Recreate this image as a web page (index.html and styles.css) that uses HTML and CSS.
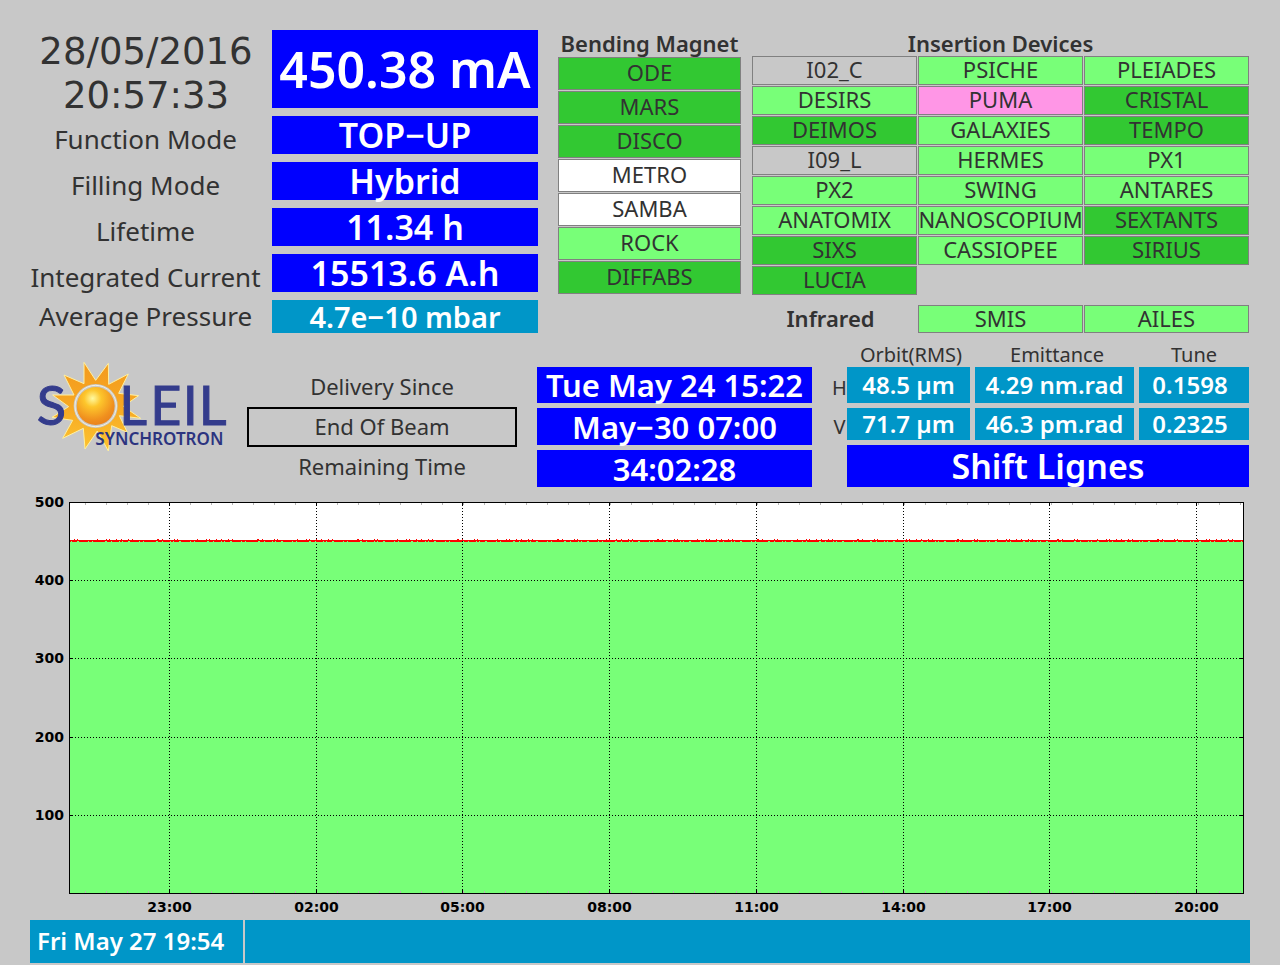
FILE: index.html
```html
<!DOCTYPE html>
<html lang="en">
<head>
<meta charset="utf-8">
<title>SOLEIL Machine Status</title>
<link rel="stylesheet" href="styles.css">
</head>
<body>
<main class="panel">
  <section class="top">
    <div class="machine">
      <div class="clock"><span>28/05/2016</span><span>20:57:33</span></div>
      <div class="value current">450.38 mA</div>
      <div class="label">Function Mode</div><div class="value">TOP−UP</div>
      <div class="label">Filling Mode</div><div class="value">Hybrid</div>
      <div class="label">Lifetime</div><div class="value">11.34 h</div>
      <div class="label">Integrated Current</div><div class="value">15513.6 A.h</div>
      <div class="label pressure">Average Pressure</div><div class="value teal pressure-value">4.7e−10 mbar</div>
    </div>
    <div class="bending">
      <h2>Bending Magnet</h2>
      <div class="magnets">
        <div class="line open">ODE</div>
        <div class="line open">MARS</div>
        <div class="line open">DISCO</div>
        <div class="line idle">METRO</div>
        <div class="line idle">SAMBA</div>
        <div class="line ready">ROCK</div>
        <div class="line open">DIFFABS</div>
      </div>
    </div>
    <div class="insertion">
      <h2>Insertion Devices</h2>
      <div class="devices">
        <div class="line">I02_C</div><div class="line ready">PSICHE</div><div class="line ready">PLEIADES</div>
        <div class="line ready">DESIRS</div><div class="line alert">PUMA</div><div class="line open">CRISTAL</div>
        <div class="line open">DEIMOS</div><div class="line ready">GALAXIES</div><div class="line open">TEMPO</div>
        <div class="line">I09_L</div><div class="line ready">HERMES</div><div class="line ready">PX1</div>
        <div class="line ready">PX2</div><div class="line ready">SWING</div><div class="line ready">ANTARES</div>
        <div class="line ready">ANATOMIX</div><div class="line ready">NANOSCOPIUM</div><div class="line open">SEXTANTS</div>
        <div class="line open">SIXS</div><div class="line ready">CASSIOPEE</div><div class="line open">SIRIUS</div>
        <div class="line open">LUCIA</div>
      </div>
      <div class="infrared">
        <h2>Infrared</h2><div class="line ready">SMIS</div><div class="line ready">AILES</div>
      </div>
    </div>
  </section>

  <section class="middle">
    <svg class="logo" viewBox="0 0 630 300" role="img" aria-label="SOLEIL Synchrotron">
      <defs>
        <radialGradient id="ball" cx="0.42" cy="0.3" r="0.75">
          <stop offset="0" stop-color="#fff9a0"/><stop offset="0.3" stop-color="#fdc62c"/>
          <stop offset="0.75" stop-color="#f0901e"/><stop offset="1" stop-color="#e87f1c"/>
        </radialGradient>
        <linearGradient id="rays" x1="0" y1="0" x2="0" y2="1">
          <stop offset="0" stop-color="#f39a1c"/><stop offset="0.5" stop-color="#f7a823"/><stop offset="1" stop-color="#fcc430"/>
        </linearGradient>
      </defs>
      <polygon class="rays" points="162,22 197,76 235,25 236,88 295,57 266,115 326,122 280,154 332,190 268,182 292,232 245,212 235,288 202,228 165,282 160,220 98,250 128,196 66,187 116,155 68,120 132,120 102,60 162,86"/>
      <circle cx="197" cy="153" r="66" fill="#c8c8c8"/>
      <circle cx="197" cy="153" r="62" fill="none" stroke="#f4f0dc" stroke-width="3"/>
      <circle cx="197" cy="153" r="57" fill="url(#ball)"/>
      <text class="brand" x="20 268 361 458 506" y="211">SLEIL</text>
      <text class="subbrand" x="196" y="269">SYNCHROTRON</text>
    </svg>
    <div class="schedule">
      <span>Delivery Since</span>
      <span class="boxed">End Of Beam</span>
      <span>Remaining Time</span>
    </div>
    <div class="times">
      <div class="value">Tue May 24 15:22</div>
      <div class="value">May−30 07:00</div>
      <div class="value">34:02:28</div>
    </div>
    <div class="beam">
      <table>
        <colgroup><col class="c-axis"><col class="c-orbit"><col class="c-emit"><col class="c-tune"></colgroup>
        <thead><tr><td></td><th scope="col">Orbit(RMS)</th><th scope="col">Emittance</th><th scope="col">Tune</th></tr></thead>
        <tbody>
          <tr class="h"><th scope="row">H</th><td>48.5 µm</td><td>4.29 nm.rad</td><td class="tune">0.1598</td></tr>
          <tr class="v"><th scope="row">V</th><td>71.7 µm</td><td>46.3 pm.rad</td><td class="tune">0.2325</td></tr>
        </tbody>
      </table>
      <div class="value shift">Shift Lignes</div>
    </div>
  </section>

  <section class="chart">
    <svg class="plot" role="img" aria-label="Beam current over the last 24 hours">
      <rect width="100%" height="392" fill="#fff"/>
      <rect y="39" width="100%" height="353" fill="#78ff78"/>
      <g class="minor"><line x1="16" x2="100%" y1="2" y2="2"/><line x1="16" x2="100%" y1="390" y2="390"/></g>
      <g class="grid">
        <line x1="0" x2="100%" y1="78.5" y2="78.5"/><line x1="0" x2="100%" y1="156.5" y2="156.5"/>
        <line x1="0" x2="100%" y1="235.5" y2="235.5"/><line x1="0" x2="100%" y1="313.5" y2="313.5"/>
        <line x1="8.55%" x2="8.55%" y1="0" y2="392"/><line x1="21.06%" x2="21.06%" y1="0" y2="392"/>
        <line x1="33.49%" x2="33.49%" y1="0" y2="392"/><line x1="46%" x2="46%" y1="0" y2="392"/>
        <line x1="58.51%" x2="58.51%" y1="0" y2="392"/><line x1="71.02%" x2="71.02%" y1="0" y2="392"/>
        <line x1="83.45%" x2="83.45%" y1="0" y2="392"/><line x1="95.96%" x2="95.96%" y1="0" y2="392"/>
      </g>
      <g class="ticks">
        <line x1="8.55%" x2="8.55%" y1="0" y2="392"/><line x1="21.06%" x2="21.06%" y1="0" y2="392"/>
        <line x1="33.49%" x2="33.49%" y1="0" y2="392"/><line x1="46%" x2="46%" y1="0" y2="392"/>
        <line x1="58.51%" x2="58.51%" y1="0" y2="392"/><line x1="71.02%" x2="71.02%" y1="0" y2="392"/>
        <line x1="83.45%" x2="83.45%" y1="0" y2="392"/><line x1="95.96%" x2="95.96%" y1="0" y2="392"/>
      </g>
      <g class="side">
        <line x1="0" x2="4" y1="78.5" y2="78.5"/><line x1="0" x2="4" y1="156.5" y2="156.5"/>
        <line x1="0" x2="4" y1="235.5" y2="235.5"/><line x1="0" x2="4" y1="313.5" y2="313.5"/>
        <line x1="99.66%" x2="100%" y1="78.5" y2="78.5"/><line x1="99.66%" x2="100%" y1="156.5" y2="156.5"/>
        <line x1="99.66%" x2="100%" y1="235.5" y2="235.5"/><line x1="99.66%" x2="100%" y1="313.5" y2="313.5"/>
      </g>
      <g class="trace">
        <line class="peaks" x1="5" x2="100%" y1="37.5" y2="37.5"/>
        <line x1="0" x2="100%" y1="38.5" y2="38.5"/>
        <line class="dips" x1="0" x2="100%" y1="39.5" y2="39.5"/>
      </g>
      <g class="frame"><line x1="0" x2="100%" y1="0.5" y2="0.5"/><line x1="0" x2="100%" y1="391.5" y2="391.5"/><line x1="0.5" x2="0.5" y1="0" y2="392"/><line x1="99.96%" x2="99.96%" y1="0" y2="392"/></g>
      <g class="yaxis">
        <text x="-5" y="5">500</text><text x="-5" y="83">400</text><text x="-5" y="161">300</text>
        <text x="-5" y="240">200</text><text x="-5" y="318">100</text>
      </g>
      <g class="xaxis">
        <text x="8.55%" y="410">23:00</text><text x="21.06%" y="410">02:00</text><text x="33.49%" y="410">05:00</text>
        <text x="46%" y="410">08:00</text><text x="58.51%" y="410">11:00</text><text x="71.02%" y="410">14:00</text>
        <text x="83.45%" y="410">17:00</text><text x="95.96%" y="410">20:00</text>
      </g>
    </svg>
  </section>

  <footer class="messages">
    <div>Fri May 27 19:54</div><div></div>
  </footer>
</main>
</body>
</html>
```
FILE: styles.css
```css
* { box-sizing: border-box; }
body {
  margin: 0;
  background: #c8c8c8;
  color: #323232;
  font-family: "DejaVu Sans", "Noto Sans", sans-serif;
}
.panel { padding: 30px 30px 2px; }
h2 {
  margin: 0;
  font: 600 22px/26px "Noto Sans", sans-serif;
  text-align: center;
  white-space: nowrap;
}
.top {
  display: grid;
  grid-template-columns: 508fr 203fr 509fr;
}
.machine {
  display: grid;
  grid-template-columns: 242fr 266fr;
  grid-template-rows: 78px repeat(4, 38px) 33px;
  row-gap: 8px;
}
.clock {
  display: flex;
  flex-direction: column;
  padding-right: 10px;
  text-align: center;
  font-size: 37px;
  line-height: 44px;
}
.label {
  padding: 4px 11px 0 0;
  text-align: center;
  font: 26px/38px "Noto Sans", sans-serif;
  white-space: nowrap;
}
.pressure { padding-top: 0; line-height: 33px; }
.value {
  display: flex;
  align-items: center;
  justify-content: center;
  background: #0000ff;
  color: #fff;
  font: 600 34px/38px "Noto Sans", sans-serif;
  white-space: nowrap;
}
.value.current { font-size: 50px; }
.value.teal { background: #0096c8; }
.value.pressure-value { font-size: 29px; line-height: 33px; }

.bending { padding-left: 20px; }
.magnets { display: grid; gap: 1px; margin-top: 1px; grid-auto-rows: 33px; }
.insertion { padding: 0 1px 0 11px; }
.devices {
  display: grid;
  grid-template-columns: repeat(3, minmax(0, 1fr));
  grid-auto-rows: 29px;
  gap: 1px;
}
.infrared {
  display: grid;
  grid-template-columns: repeat(3, minmax(0, 1fr));
  grid-auto-rows: 28px;
  gap: 1px;
  margin-top: 10px;
}
.infrared h2 { padding-right: 8px; }
.line {
  display: flex;
  align-items: center;
  justify-content: center;
  padding-bottom: 3px;
  border: 1px solid #808080;
  font: 22px/24px "Noto Sans", sans-serif;
}
.ready { background: #78ff78; }
.open { background: #32c832; }
.idle { background: #fff; }
.alert { background: #ff96e6; }

.middle {
  display: grid;
  grid-template-columns: 217fr 290fr 275fr 438fr;
  margin-top: 9px;
  height: 145px;
}
.logo { width: 210px; height: 100px; margin-top: 13px; }
.rays { fill: url(#rays); stroke: #fff0a0; stroke-width: 3; }
.brand { font: 162px "Lato", sans-serif; fill: #343c8c; stroke: #343c8c; stroke-width: 3; }
.subbrand { font: 600 51px "Noto Sans", sans-serif; fill: #2c3480; }
.schedule {
  display: grid;
  grid-template-rows: 40px 40px 40px;
  align-content: end;
  margin-right: 20px;
  text-align: center;
  font: 22px/38px "Noto Sans", sans-serif;
}
.boxed { border: 2px solid #000; line-height: 34px; }
.times {
  display: grid;
  grid-template-rows: 36px 37px 37px;
  align-content: end;
  gap: 5px;
}
.times .value { font-size: 31px; line-height: 36px; }
.beam { display: flex; flex-direction: column; padding: 0 1px 0 20px; }
table {
  width: 100%;
  table-layout: fixed;
  border-collapse: separate;
  border-spacing: 0;
}
.c-axis { width: 15px; }
.c-orbit { width: 128px; }
.c-emit { width: 164px; }
th { font: 20px/25px "Noto Sans", sans-serif; padding: 0; text-align: center; }
td { padding: 0; }
tbody td {
  background: #0096c8;
  background-clip: padding-box;
  border-right: 5px solid transparent;
  border-bottom: 5px solid transparent;
  color: #fff;
  text-align: center;
  font: 600 24px/24px "Noto Sans", sans-serif;
}
tbody td.tune { border-right: 0; padding-right: 8px; }
.h { height: 41px; }
.v { height: 37px; }
.shift { height: 42px; margin-left: 15px; }

.chart { margin-top: 15px; padding: 0 6px 0 39px; }
.plot { display: block; width: 100%; height: 392px; overflow: visible; }
.plot line { shape-rendering: crispEdges; }
.minor line { stroke: #b4b4b4; stroke-width: 2; stroke-dasharray: 1 20; }
.grid line { stroke: #000; stroke-dasharray: 1 2; }
.ticks line { stroke: #000; stroke-dasharray: 4 384; }
.side line, .frame line { stroke: #000; }
.trace line { stroke: #ff0000; }
.trace .peaks { stroke-dasharray: 1 2 1 19 1 8 1 2 1 6 1 4 1 6 1 3 1 24 2 3 1 11; }
.trace .dips { stroke-dasharray: 2 1 5 2 9 1 3 1 12 2 4 1 7 1; }
.plot text { font: 700 14px "DejaVu Sans", sans-serif; fill: #000; }
.yaxis text { text-anchor: end; }
.xaxis text { text-anchor: middle; }

.messages {
  display: grid;
  grid-template-columns: 213fr 1005fr;
  gap: 2px;
  margin-top: 26px;
}
.messages div {
  height: 43px;
  padding-left: 7px;
  background: #0096c8;
  color: #fff;
  font: 600 24px/42px "Noto Sans", sans-serif;
  white-space: nowrap;
}
```
